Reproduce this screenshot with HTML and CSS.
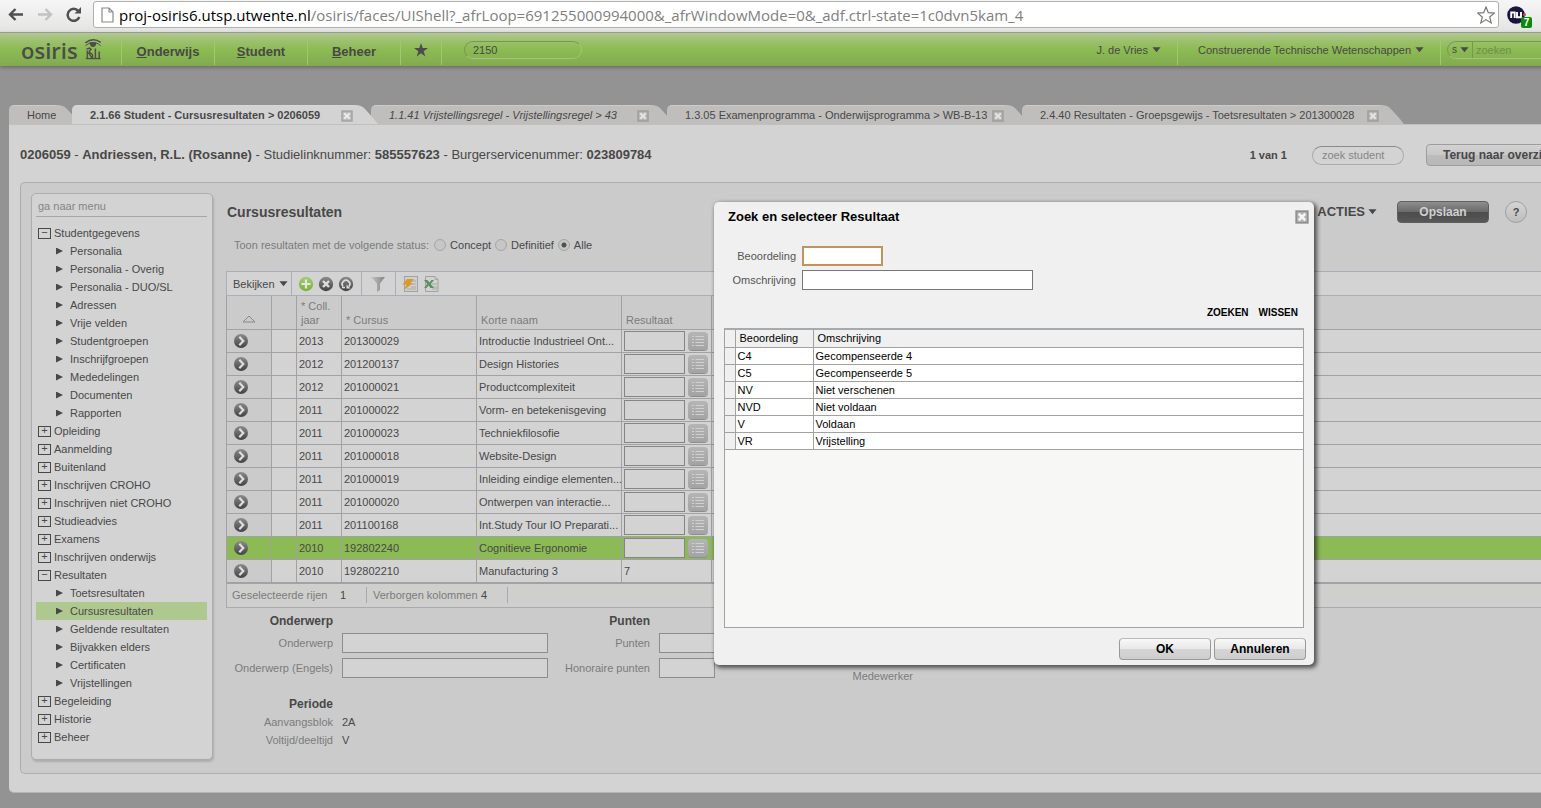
FILE: index.html
```html
<!DOCTYPE html>
<html lang="nl">
<head>
<meta charset="utf-8">
<title>Osiris - Cursusresultaten</title>
<link rel="stylesheet" href="styles.css">
</head>
<body>
<svg class="defs" aria-hidden="true">
  <defs>
    <linearGradient id="g-dark" x1="0" y1="0" x2="0" y2="1"><stop offset="0" stop-color="#8c8c8c"/><stop offset="1" stop-color="#424242"/></linearGradient>
    <linearGradient id="g-green" x1="0" y1="0" x2="0" y2="1"><stop offset="0" stop-color="#a5cc72"/><stop offset="1" stop-color="#7bb03a"/></linearGradient>
    <linearGradient id="g-funnel" x1="0" y1="0" x2="1" y2="0"><stop offset="0" stop-color="#c4c4c4"/><stop offset="1" stop-color="#838383"/></linearGradient>
    <symbol id="i-close" viewBox="0 0 12 12"><rect x="1" y="1" width="10" height="10" fill="#b0b0b0" stroke="#8f8f8f" stroke-width="1.4"/><path d="M3.2 3.2l5.6 5.6M8.800 3.200l-5.600 5.600" stroke="#f4f4f4" stroke-width="2.2"/></symbol>
    <symbol id="i-slope" viewBox="0 0 24 19"><path d="M0 0C6 0 8 1 11 4L20 14Q23 18 24 19H0Z" fill="currentColor"/></symbol>
    <symbol id="i-go" viewBox="0 0 16 16"><circle cx="8" cy="8" r="7" fill="url(#g-dark)"/><path d="M6.300 3.800L10.300 8l-4 4.200" fill="none" stroke="#dedede" stroke-width="2.200"/></symbol>
    <symbol id="i-list" viewBox="0 0 20 18"><path d="M4 4.500h2M4 7.500h2M4 10.500h2M4 13.500h2M7.500 4.500H16M7.500 7.500H16M7.500 10.500H16M7.500 13.500H16" stroke="#d0d0d0" stroke-width="1.200"/></symbol>
    <symbol id="i-down" viewBox="0 0 10 6"><path d="M0.500 0h9L5 5.500z" fill="currentColor"/></symbol>
  </defs>
</svg>

<header class="browser">
  <svg class="nav-ico" viewBox="0 0 16 14"><path d="M15 7H3M7.500 1.500L2 7l5.500 5.500" fill="none" stroke="#505050" stroke-width="2.400"/></svg>
  <svg class="nav-ico" viewBox="0 0 16 14"><path d="M1 7h12M8.500 1.500L14 7l-5.500 5.500" fill="none" stroke="#c2c2c2" stroke-width="2.400"/></svg>
  <svg class="nav-ico" viewBox="0 0 16 15"><path d="M12.300 4A6 6 0 1 0 13.300 10" fill="none" stroke="#505050" stroke-width="2.500"/><path d="M15 0v6.500H8.500z" fill="#505050"/></svg>
  <div class="address">
    <svg class="doc" viewBox="0 0 13 16"><path d="M1 1h7l4 4v10H1zM8 1v4h4" fill="none" stroke="#8a8a8a" stroke-width="1.200"/></svg>
    <span class="url"><b>proj-osiris6.utsp.utwente.nl</b>/osiris/faces/UIShell?_afrLoop=691255000994000&amp;_afrWindowMode=0&amp;_adf.ctrl-state=1c0dvn5kam_4</span>
    <svg class="fav" viewBox="0 0 18 18"><path d="M9 1l2.300 5.700 6 .4-4.600 3.900 1.500 5.900L9 13.600 3.800 16.900l1.500-5.900L.7 7.100l6-.4z" fill="#fff" stroke="#777" stroke-width="1.200"/></svg>
  </div>
  <div class="extension">
    <svg viewBox="0 0 20 18"><circle cx="9" cy="9" r="8.800" fill="#1b1440"/><path d="M4.200 12V6.500h3.500V12M10 6v5.300h4V6" fill="none" stroke="#fff" stroke-width="1.900"/><circle cx="17.500" cy="8.500" r="1.500" fill="#d8405a"/></svg>
    <span class="badge">7</span>
  </div>
</header>

<nav class="topbar">
  <a class="brand" href="#">osiris
    <svg viewBox="0 0 18 22"><path d="M1 4Q9-2 17 3.500" fill="none" stroke="#4c4c4c" stroke-width="1.500"/><path d="M1 7Q4 5 6 4h6q3 1 5 3" fill="none" stroke="#4c4c4c"/><path d="M5.500 3.500h7Q12.500 8.500 9 8.500T5.500 3.500z" fill="#4c4c4c"/><path d="M2 10.500l3.500-1L7 11l-2 1.500 1 2 2.500 2v3.500M3 12v8M4 14l4 6" fill="none" stroke="#4c4c4c" stroke-width="1.400"/><path d="M11.500 10v10M15.500 13v7" stroke="#4c4c4c" stroke-width="1.500"/><path d="M1.500 20.500h15.500" stroke="#4c4c4c" stroke-width="1.300"/></svg>
  </a>
  <a class="menu" href="#"><u>O</u>nderwijs</a>
  <a class="menu" href="#"><u>S</u>tudent</a>
  <a class="menu" href="#"><u>B</u>eheer</a>
  <a class="menu star" href="#" aria-label="Favorieten"><svg viewBox="0 0 14 14"><path d="M7 0l1.700 5H14L9.700 8.200l1.600 5.300L7 10.300l-4.300 3.200 1.600-5.300L0 5h5.300z" fill="#4c4c4c"/></svg></a>
  <input class="quick" type="text" value="2150" aria-label="Schermcode">
  <button class="drop user" type="button">J. de Vries <svg><use href="#i-down"/></svg></button>
  <button class="drop faculty" type="button">Construerende Technische Wetenschappen <svg><use href="#i-down"/></svg></button>
  <div class="finder">
    <button class="kind" type="button">s <svg><use href="#i-down"/></svg></button>
    <input type="text" placeholder="zoeken" aria-label="zoeken">
  </div>
</nav>

<div class="tabs">
  <div class="tab home"><a href="#">Home</a><svg class="slope"><use href="#i-slope"/></svg></div>
  <div class="tab t-active"><a href="#">2.1.66 Student - Cursusresultaten &gt; 0206059</a><button type="button" aria-label="Sluiten"><svg><use href="#i-close"/></svg></button><svg class="slope"><use href="#i-slope"/></svg></div>
  <div class="tab t-second"><a href="#"><i>1.1.41 Vrijstellingsregel - Vrijstellingsregel &gt; 43</i></a><button type="button" aria-label="Sluiten"><svg><use href="#i-close"/></svg></button><svg class="slope"><use href="#i-slope"/></svg></div>
  <div class="tab t-third"><a href="#">1.3.05 Examenprogramma - Onderwijsprogramma &gt; WB-B-13</a><button type="button" aria-label="Sluiten"><svg><use href="#i-close"/></svg></button><svg class="slope"><use href="#i-slope"/></svg></div>
  <div class="tab t-fourth"><a href="#">2.4.40 Resultaten - Groepsgewijs - Toetsresultaten &gt; 201300028</a><button type="button" aria-label="Sluiten"><svg><use href="#i-close"/></svg></button><svg class="slope"><use href="#i-slope"/></svg></div>
</div>

<div class="page">
  <div class="pagehead">
    <div class="student"><b>0206059</b> - <b>Andriessen, R.L. (Rosanne)</b> - Studielinknummer: <b>585557623</b> - Burgerservicenummer: <b>023809784</b></div>
    <b class="count">1 van 1</b>
    <input class="find-student" type="text" placeholder="zoek student" aria-label="zoek student">
    <button class="back" type="button">Terug naar overzicht</button>
  </div>

  <div class="panel">
    <aside class="side">
      <input class="goto" type="text" placeholder="ga naar menu" aria-label="ga naar menu">
      <ul class="tree">
        <li><a class="open" href="#">Studentgegevens</a>
          <ul>
            <li><a href="#">Personalia</a></li>
            <li><a href="#">Personalia - Overig</a></li>
            <li><a href="#">Personalia - DUO/SL</a></li>
            <li><a href="#">Adressen</a></li>
            <li><a href="#">Vrije velden</a></li>
            <li><a href="#">Studentgroepen</a></li>
            <li><a href="#">Inschrijfgroepen</a></li>
            <li><a href="#">Mededelingen</a></li>
            <li><a href="#">Documenten</a></li>
            <li><a href="#">Rapporten</a></li>
          </ul>
        </li>
        <li><a class="shut" href="#">Opleiding</a></li>
        <li><a class="shut" href="#">Aanmelding</a></li>
        <li><a class="shut" href="#">Buitenland</a></li>
        <li><a class="shut" href="#">Inschrijven CROHO</a></li>
        <li><a class="shut" href="#">Inschrijven niet CROHO</a></li>
        <li><a class="shut" href="#">Studieadvies</a></li>
        <li><a class="shut" href="#">Examens</a></li>
        <li><a class="shut" href="#">Inschrijven onderwijs</a></li>
        <li><a class="open" href="#">Resultaten</a>
          <ul>
            <li><a href="#">Toetsresultaten</a></li>
            <li><a class="current" href="#">Cursusresultaten</a></li>
            <li><a href="#">Geldende resultaten</a></li>
            <li><a href="#">Bijvakken elders</a></li>
            <li><a href="#">Certificaten</a></li>
            <li><a href="#">Vrijstellingen</a></li>
          </ul>
        </li>
        <li><a class="shut" href="#">Begeleiding</a></li>
        <li><a class="shut" href="#">Historie</a></li>
        <li><a class="shut" href="#">Beheer</a></li>
      </ul>
    </aside>

    <main class="main">
      <div class="titlebar">
        <h1>Cursusresultaten</h1>
        <button class="acties" type="button">ACTIES <svg><use href="#i-down"/></svg></button>
        <button class="save" type="button">Opslaan</button>
        <button class="help" type="button">?</button>
      </div>
      <div class="status">
        <span class="lead">Toon resultaten met de volgende status:</span>
        <label><input type="radio" name="status">Concept</label>
        <label><input type="radio" name="status">Definitief</label>
        <label><input type="radio" name="status" checked>Alle</label>
      </div>

      <div class="toolbar">
        <div class="group view"><button type="button">Bekijken <svg class="arrow"><use href="#i-down"/></svg></button></div>
        <div class="group acts">
          <button type="button" aria-label="Toevoegen"><svg viewBox="0 0 16 16"><circle cx="8" cy="8" r="7.200" fill="url(#g-green)"/><path d="M8 3.500v9M3.500 8h9" stroke="#e6e6e6" stroke-width="2.200"/></svg></button>
          <button type="button" aria-label="Verwijderen"><svg viewBox="0 0 16 16"><circle cx="8" cy="8" r="7.200" fill="url(#g-dark)"/><path d="M5 5l6 6M11 5l-6 6" stroke="#dedede" stroke-width="2.400"/></svg></button>
          <button type="button" aria-label="Herstellen"><svg viewBox="0 0 16 16"><circle cx="8" cy="8" r="7.200" fill="url(#g-dark)"/><path d="M5 10.500A3.800 3.800 0 1 1 11 10.500" fill="none" stroke="#dedede" stroke-width="1.700"/><path d="M8.500 8.500v4h4z" fill="#dedede"/><path d="M4 11.500h3" stroke="#dedede" stroke-width="1.500"/></svg></button>
        </div>
        <div class="group filter">
          <button type="button" aria-label="Filter"><svg viewBox="0 0 16 16"><path d="M1 1h14l-5 6.500V14l-3 2V7.500z" fill="url(#g-funnel)"/></svg></button>
        </div>
        <div class="group exports">
          <button type="button" aria-label="Snelle invoer"><svg viewBox="0 0 16 16"><rect x="2.500" y=".5" width="13" height="15" fill="#cfcfcf" stroke="#a2a2a2"/><path d="M9 5h5M9 8h5M9 11h5M5 13h9" stroke="#aaa"/><path d="M5 3h7L8.500 7H11L2 14l2.500-5.500H.5z" fill="#d99a2b"/></svg></button>
          <button type="button" aria-label="Exporteren naar Excel"><svg viewBox="0 0 16 16"><path d="M2.500.5H12l3 3v12H2.500z" fill="#d2d2d2" stroke="#a2a2a2"/><path d="M12 .5v3h3M9 8h5M9 11h5M9 13h5" fill="none" stroke="#9ab29a"/><path d="M1 4h3.500l2 2.500 2-2.500h2.500L7.800 8l3.200 4H7.500L5.600 9.500 3.500 12H1l3.200-4z" fill="#5c9061"/></svg></button>
        </div>
      </div>

      <table class="grid">
        <colgroup><col class="c1"><col class="c2"><col class="c3"><col class="c4"><col class="c5"><col class="c6"><col></colgroup>
        <thead>
          <tr><th class="sort"><svg viewBox="0 0 14 8"><path d="M1 7h12L7 1z" fill="none" stroke="#888"/></svg></th><th></th><th>* Coll. jaar</th><th>* Cursus</th><th>Korte naam</th><th>Resultaat</th><th></th></tr>
        </thead>
        <tbody>
          <tr><td><button class="go" type="button" aria-label="Openen"><svg><use href="#i-go"/></svg></button></td><td></td><td>2013</td><td>201300029</td><td>Introductie Industrieel Ont...</td><td><div class="pick"><input type="text" aria-label="Resultaat"><button type="button" aria-label="Kiezen"><svg><use href="#i-list"/></svg></button></div></td><td></td></tr>
          <tr><td><button class="go" type="button" aria-label="Openen"><svg><use href="#i-go"/></svg></button></td><td></td><td>2012</td><td>201200137</td><td>Design Histories</td><td><div class="pick"><input type="text" aria-label="Resultaat"><button type="button" aria-label="Kiezen"><svg><use href="#i-list"/></svg></button></div></td><td></td></tr>
          <tr><td><button class="go" type="button" aria-label="Openen"><svg><use href="#i-go"/></svg></button></td><td></td><td>2012</td><td>201000021</td><td>Productcomplexiteit</td><td><div class="pick"><input type="text" aria-label="Resultaat"><button type="button" aria-label="Kiezen"><svg><use href="#i-list"/></svg></button></div></td><td></td></tr>
          <tr><td><button class="go" type="button" aria-label="Openen"><svg><use href="#i-go"/></svg></button></td><td></td><td>2011</td><td>201000022</td><td>Vorm- en betekenisgeving</td><td><div class="pick"><input type="text" aria-label="Resultaat"><button type="button" aria-label="Kiezen"><svg><use href="#i-list"/></svg></button></div></td><td></td></tr>
          <tr><td><button class="go" type="button" aria-label="Openen"><svg><use href="#i-go"/></svg></button></td><td></td><td>2011</td><td>201000023</td><td>Techniekfilosofie</td><td><div class="pick"><input type="text" aria-label="Resultaat"><button type="button" aria-label="Kiezen"><svg><use href="#i-list"/></svg></button></div></td><td></td></tr>
          <tr><td><button class="go" type="button" aria-label="Openen"><svg><use href="#i-go"/></svg></button></td><td></td><td>2011</td><td>201000018</td><td>Website-Design</td><td><div class="pick"><input type="text" aria-label="Resultaat"><button type="button" aria-label="Kiezen"><svg><use href="#i-list"/></svg></button></div></td><td></td></tr>
          <tr><td><button class="go" type="button" aria-label="Openen"><svg><use href="#i-go"/></svg></button></td><td></td><td>2011</td><td>201000019</td><td>Inleiding eindige elementen...</td><td><div class="pick"><input type="text" aria-label="Resultaat"><button type="button" aria-label="Kiezen"><svg><use href="#i-list"/></svg></button></div></td><td></td></tr>
          <tr><td><button class="go" type="button" aria-label="Openen"><svg><use href="#i-go"/></svg></button></td><td></td><td>2011</td><td>201000020</td><td>Ontwerpen van interactie...</td><td><div class="pick"><input type="text" aria-label="Resultaat"><button type="button" aria-label="Kiezen"><svg><use href="#i-list"/></svg></button></div></td><td></td></tr>
          <tr><td><button class="go" type="button" aria-label="Openen"><svg><use href="#i-go"/></svg></button></td><td></td><td>2011</td><td>201100168</td><td>Int.Study Tour IO Preparati...</td><td><div class="pick"><input type="text" aria-label="Resultaat"><button type="button" aria-label="Kiezen"><svg><use href="#i-list"/></svg></button></div></td><td></td></tr>
          <tr class="selected"><td><button class="go" type="button" aria-label="Openen"><svg><use href="#i-go"/></svg></button></td><td></td><td>2010</td><td>192802240</td><td>Cognitieve Ergonomie</td><td><div class="pick"><input type="text" aria-label="Resultaat"><button type="button" aria-label="Kiezen"><svg><use href="#i-list"/></svg></button></div></td><td></td></tr>
          <tr><td><button class="go" type="button" aria-label="Openen"><svg><use href="#i-go"/></svg></button></td><td></td><td>2010</td><td>192802210</td><td>Manufacturing 3</td><td>7</td><td></td></tr>
        </tbody>
      </table>
      <div class="gridfoot">
        <div class="rows">Geselecteerde rijen <span>1</span></div>
        <div class="cols">Verborgen kolommen <span>4</span></div>
      </div>

      <div class="form">
        <div class="fields">
          <h2>Onderwerp</h2>
          <label for="ond">Onderwerp</label><input id="ond" type="text">
          <label for="ond-en">Onderwerp (Engels)</label><input id="ond-en" type="text">
        </div>
        <div class="fields points">
          <h2>Punten</h2>
          <label for="pnt">Punten</label><input id="pnt" type="text">
          <label for="hpnt">Honoraire punten</label><input id="hpnt" type="text">
        </div>
        <div class="staff">Medewerker</div>
      </div>
      <div class="fields period">
        <h2>Periode</h2>
        <span class="name">Aanvangsblok</span><span>2A</span>
        <span class="name">Voltijd/deeltijd</span><span>V</span>
      </div>
    </main>
  </div>
</div>

<section class="dialog" role="dialog" aria-labelledby="dlg-title">
  <div class="dlg-head">
    <h2 id="dlg-title">Zoek en selecteer Resultaat</h2>
    <button type="button" aria-label="Sluiten"><svg><use href="#i-close"/></svg></button>
  </div>
  <div class="dlg-form">
    <label for="beo">Beoordeling</label><input id="beo" class="focus" type="text">
    <label for="oms">Omschrijving</label><input id="oms" class="wide" type="text">
  </div>
  <div class="dlg-actions"><button type="button">ZOEKEN</button><button type="button">WISSEN</button></div>
  <div class="dlg-list">
    <table>
      <colgroup><col class="d1"><col class="d2"><col></colgroup>
      <thead><tr><th></th><th>Beoordeling</th><th>Omschrijving</th></tr></thead>
      <tbody>
        <tr><td></td><td>C4</td><td>Gecompenseerde 4</td></tr>
        <tr><td></td><td>C5</td><td>Gecompenseerde 5</td></tr>
        <tr><td></td><td>NV</td><td>Niet verschenen</td></tr>
        <tr><td></td><td>NVD</td><td>Niet voldaan</td></tr>
        <tr><td></td><td>V</td><td>Voldaan</td></tr>
        <tr><td></td><td>VR</td><td>Vrijstelling</td></tr>
      </tbody>
    </table>
  </div>
  <div class="dlg-foot"><button type="button">OK</button><button type="button">Annuleren</button></div>
</section>
</body>
</html>
```

FILE: styles.css
```css
* { box-sizing: border-box; }
body {
  margin: 0;
  min-height: 100vh;
  position: relative;
  overflow: hidden;
  background: #939393;
  color: #484848;
  font: 11px/14px "Liberation Sans", Arial, sans-serif;
}
button, input { font: inherit; color: inherit; margin: 0; padding: 0; }
button { background: none; border: 0; white-space: nowrap; }
a { color: inherit; text-decoration: none; }
svg { display: block; flex: none; }
h1, h2 { margin: 0; }
ul { list-style: none; margin: 0; padding: 0; }
.defs { position: absolute; width: 0; height: 0; }

/* browser chrome */
.browser {
  display: flex;
  align-items: center;
  height: 33px;
  padding: 0 8px 3px 8px;
  background: linear-gradient(#f6f6f6, #e4e4e4);
  border-bottom: 1px solid #a6a6a6;
}
.nav-ico { width: 16px; height: 15px; margin-right: 13px; }
.address {
  flex: 1;
  display: flex;
  align-items: center;
  height: 27px;
  margin: 0 8px 0 -2px;
  padding: 0 3px 0 7px;
  background: #fff;
  border: 1px solid #b0b0b0;
  border-radius: 3px;
}
.doc { width: 13px; height: 16px; }
.url { flex: 1; padding-left: 5px; font: 15px/22px "Open Sans", "Noto Sans", sans-serif; color: #808080; white-space: nowrap; }
.url b { font-weight: 400; color: #000; }
.fav { width: 18px; height: 18px; }
.extension { position: relative; width: 26px; }
.extension svg { width: 20px; height: 18px; }
.badge {
  position: absolute;
  left: 14px;
  top: 11px;
  width: 11px;
  height: 11px;
  border-radius: 2px;
  background: #0a8a0a;
  color: #fff;
  font: bold 10px/11px "Liberation Sans", Arial, sans-serif;
  text-align: center;
}

/* application bar */
.topbar {
  display: flex;
  align-items: center;
  height: 33px;
  margin-right: -60px;
  background: linear-gradient(#b0c892 0%, #9cc06d 25%, #8cbb53 50%, #82aa51 100%);
  box-shadow: 0 1px 4px rgba(0, 0, 0, .35);
}
.brand {
  display: flex;
  align-items: center;
  gap: 6px;
  width: 121px;
  padding-left: 21px;
  font: 600 22px/30px "Open Sans", sans-serif;
  color: #4c4c4c;
}
.brand svg { width: 18px; height: 21px; }
.menu {
  width: 93px;
  height: 30px;
  border-left: 1px solid #a0c86e;
  font: bold 13px/33px "Liberation Sans", Arial, sans-serif;
  text-align: center;
}
.star { width: 42px; display: flex; align-items: center; justify-content: center; border-right: 1px solid #a0c86e; }
.star svg { width: 14px; height: 14px; }
.quick {
  width: 118px;
  height: 18px;
  margin: 0 auto 0 22px;
  padding: 0 8px;
  background: none;
  border: 1px solid #a0c578;
  border-top-color: #769a4c;
  border-left-color: #769a4c;
  border-radius: 9px;
}
.drop { display: flex; align-items: center; gap: 4px; height: 30px; }
.drop svg, .kind svg { width: 9px; height: 6px; }
.user { padding-right: 16px; }
.faculty { padding: 0 16px 0 20px; border: solid #a0c86e; border-width: 0 1px; }
.finder { display: flex; width: 154px; height: 18px; margin-left: 6px; border: 1px solid #769a4c; border-bottom-color: #a0c578; border-radius: 9px; }
.kind { display: flex; align-items: center; gap: 3px; width: 25px; padding-left: 4px; border-right: 1px solid #769a4c; font-size: 10px; }
.finder input { width: 110px; padding-left: 3px; background: none; border: 0; }

/* tabs */
.tabs { display: flex; margin: 39px 0 0 9px; height: 19px; }
.tab { display: flex; height: 19px; margin-right: -7px; color: #bfbebc; }
.tab a, .tab button {
  height: 19px;
  background: #bfbebc;
  border-top: 1px solid #cccbc9;
  color: #484848;
  line-height: 18px;
  white-space: nowrap;
}
.tab a { flex: 1; padding-left: 18px; border-radius: 5px 0 0 0; }
.tab button { width: 13px; }
.tab button svg { width: 12px; height: 12px; margin-top: 2px; opacity: .7; }
.slope { width: 24px; height: 19px; }
.home { width: 70px; }
.t-active { position: relative; z-index: 1; width: 306px; color: #d3d3d3; }
.t-active a, .t-active button { background: #d3d3d3; border-color: #d8d8d8; font-weight: bold; }
.t-second { width: 303px; }
.t-third { width: 362px; }
.t-fourth { width: 382px; }

/* page */
.page {
  margin: 0 -40px 15px 9px;
  padding: 0 0 18px 11px;
  background: #d3d3d3;
  border: solid #b4b4b4;
  border-width: 0 0 1px;
  border-radius: 0 0 0 5px;
  box-shadow: inset 0 1px 0 #c0c0c0;
}
.pagehead { display: flex; align-items: center; height: 58px; padding-top: 4px; }
.student { flex: 1; font-size: 13px; white-space: nowrap; }
.count { margin-right: 25px; }
.find-student {
  width: 92px;
  height: 19px;
  margin-right: 22px;
  padding: 0 9px;
  background: none;
  border: 1px solid #ababab;
  border-top-color: #8a8a8a;
  border-radius: 10px;
}
input::placeholder { color: #858585; opacity: 1; }
.finder input::placeholder { color: #6f8f4d; }
.back {
  width: 155px;
  height: 22px;
  padding-left: 16px;
  background: linear-gradient(#d2d2d2, #c8c8c8 50%, #bcbcbc 51%, #b8b8b8);
  border: 1px solid #9d9d9d;
  border-radius: 4px;
  font-size: 12px;
  font-weight: bold;
  text-align: left;
}
.panel {
  display: flex;
  align-items: flex-start;
  padding: 10px 0 13px 10px;
  background: #cbcbcb;
  border: 1px solid #adadad;
  border-right: 0;
  border-radius: 5px;
}

/* side menu */
.side {
  flex: none;
  width: 182px;
  padding: 1px 5px 13px 4px;
  background: #d3d3d3;
  border: 1px solid #adadad;
  border-radius: 5px;
  box-shadow: 1px 2px 2px rgba(0, 0, 0, .15);
}
.goto { display: block; width: 100%; height: 22px; padding: 0 2px; background: none; border: 0; border-bottom: 1px solid #a6a6a6; }
.tree { padding-top: 7px; }
.tree a { display: flex; align-items: center; height: 18px; padding-left: 2px; }
.tree a::before {
  width: 11px;
  height: 9px;
  margin-right: 5px;
  border: 1px solid #484848;
  font: 11px/7px "Liberation Sans", Arial, sans-serif;
  text-align: center;
}
.tree .open::before, .tree .shut::before { content: "\2212"; margin-right: 3px; }
.tree .shut::before { content: "+"; }
.tree ul a { padding-left: 20px; }
.tree ul a::before {
  content: "";
  width: 7px;
  height: 7px;
  margin-right: 7px;
  border: 0;
  background: #484848;
  clip-path: polygon(0 0, 100% 50%, 0 100%);
}
.tree .current { background: #afc890; }

/* main column */
.main { flex: 1; min-width: 0; padding-left: 13px; }
.titlebar { display: flex; align-items: center; height: 38px; padding: 0 54px 0 1px; }
.titlebar h1 { flex: 1; font-size: 14px; line-height: 16px; }
.acties { display: flex; align-items: center; gap: 3px; margin-right: 20px; font-size: 13px; font-weight: bold; }
.acties svg { width: 9px; height: 6px; }
.save {
  width: 92px;
  height: 22px;
  margin-right: 16px;
  background: linear-gradient(#8e8e8e, #6a6a6a 50%, #4c4c4c 51%, #585858);
  border: 1px solid #606060;
  border-radius: 4px;
  color: #d0d0d0;
  font-size: 12px;
  font-weight: bold;
}
.help { width: 22px; height: 22px; border: 1px solid #a0a0a0; border-radius: 50%; background: linear-gradient(#d4d4d4, #bebebe); font-weight: bold; }
.status { display: flex; align-items: center; height: 28px; padding-left: 8px; }
.status .lead { margin-right: 5px; color: #7b7b7b; }
.status label { display: flex; align-items: center; gap: 4px; margin-right: 4px; }
.status input {
  appearance: none;
  width: 12px;
  height: 12px;
  border: 1px solid #a5a5a5;
  border-radius: 50%;
  background: #c6c6c6;
}
.status input:checked { background: radial-gradient(#505050 0 2px, #c6c6c6 3px); }
.toolbar { display: flex; height: 25px; margin-top: 12px; background: #d3d3d3; border: 1px solid #a9afb6; border-width: 1px 0 1px 1px; }
.group { display: flex; align-items: center; border-right: 1px solid #a9afb6; }
.group svg { width: 16px; height: 16px; }
.group .arrow { width: 9px; height: 6px; }
.view button { display: flex; align-items: center; gap: 4px; }
.view { width: 65px; padding-left: 6px; }
.acts { width: 70px; padding-left: 6px; gap: 4px; }
.filter { width: 34px; padding-left: 8px; }
.exports { padding-left: 6px; gap: 5px; border: 0; }

.grid { width: 100%; table-layout: fixed; border-collapse: collapse; background: #d3d3d3; }
.c1 { width: 45px; }
.c2 { width: 25px; }
.c3 { width: 45px; }
.c4 { width: 135px; }
.c5 { width: 145px; }
.c6 { width: 90px; }
.grid th, .grid td { border: 1px solid #a2a2a4; text-align: left; white-space: nowrap; }
.grid th { height: 33px; padding: 2px 4px; background: #cbcbcb; border-top: 0; color: #7b7b7b; font-weight: 400; vertical-align: bottom; white-space: normal; }
.sort svg { width: 14px; height: 8px; margin: 0 0 4px 11px; }
.grid td { height: 23px; padding: 0 2px; }
.grid td:first-child { background: #cbcbcb; }
.go { display: block; padding-left: 4px; }
.go svg { width: 16px; height: 16px; }
.pick { display: flex; align-items: center; gap: 3px; }
.pick input { width: 61px; height: 20px; background: #d3d3d3; border: 1px solid #858585; }
.pick button { width: 20px; height: 18px; border-radius: 4px; background: linear-gradient(#b5b5b5, #a3a3a3); box-shadow: 0 1px 0 #8e8e8e; }
.pick svg { width: 20px; height: 18px; }
.grid .selected td { background: #8cba55; }
.gridfoot {
  display: flex;
  align-items: center;
  height: 25px;
  background: #cfcfcd;
  border: 1px solid #a9a9b4;
  border-top-color: #a2a2a4;
  color: #7b7b7b;
}
.gridfoot div { display: flex; justify-content: space-between; height: 16px; line-height: 16px; border-right: 1px solid #a9a9b4; }
.gridfoot span { color: #484848; }
.rows { width: 140px; padding: 0 20px 0 5px; }
.cols { width: 141px; padding: 0 20px 0 6px; }

.form { display: flex; align-items: flex-start; padding-top: 7px; }
.fields { display: grid; grid-template-columns: 107px 206px; column-gap: 9px; row-gap: 5px; align-items: center; color: #484848; }
.fields h2 { grid-column: 1; grid-row: 1; font-size: 12px; line-height: 13px; text-align: right; }
.fields label, .fields .name { grid-column: 1; color: #7b7b7b; text-align: right; white-space: nowrap; }
.fields input { width: 100%; height: 20px; background: #d3d3d3; border: 1px solid #8d8d8d; }
.points { grid-template-columns: 102px 56px; }
.staff { width: 198px; padding-top: 54px; color: #7b7b7b; text-align: right; }
.period { padding-top: 15px; row-gap: 4px; }

/* result picker */
.dialog {
  position: absolute;
  z-index: 2;
  left: 714px;
  top: 202px;
  width: 600px;
  padding: 0 10px 5px;
  background: #f0f0f0;
  border-radius: 5px;
  box-shadow: 2px 2px 4px 1px rgba(0, 0, 0, .6);
  color: #000;
}
.dlg-head { display: flex; align-items: center; justify-content: space-between; height: 30px; margin-right: -5px; padding-left: 4px; }
.dlg-head h2 { font-size: 13px; line-height: 16px; }
.dlg-head svg { width: 14px; height: 14px; }
.dlg-form { display: grid; grid-template-columns: 72px auto; gap: 4px 6px; align-items: center; justify-content: start; padding-top: 14px; }
.dlg-form label { color: #555; text-align: right; }
.dlg-form input { height: 20px; background: #fff; border: 1px solid #777; }
.dlg-form .focus { width: 81px; border: 2px solid #c0945c; }
.dlg-form .wide { width: 231px; }
.dlg-actions { display: flex; justify-content: flex-end; gap: 10px; padding: 15px 6px 8px; }
.dlg-actions button { font-size: 10px; font-weight: bold; line-height: 15px; }
.dlg-list { height: 300px; background: #f7f7f5; border: 1px solid #a2a2a2; border-top: 2px solid #a4aaae; }
.dlg-list table { width: 100%; table-layout: fixed; border-collapse: collapse; background: #fff; }
.d1 { width: 10px; }
.d2 { width: 78px; }
.dlg-list th, .dlg-list td { height: 17px; padding: 0 2px; border: 1px solid #a2a2a2; border-top: 0; font-weight: 400; text-align: left; line-height: 16px; }
.dlg-list th { padding: 0 4px; background: #f0f0f0; }
.dlg-list td:first-child { background: #f0f0f0; }
.dlg-list tr > :first-child { border-left: 0; }
.dlg-list tr > :last-child { border-right: 0; }
.dlg-foot { display: flex; justify-content: flex-end; gap: 3px; margin-right: -2px; padding-top: 10px; }
.dlg-foot button {
  width: 92px;
  height: 22px;
  background: linear-gradient(#f8f8f8, #e8e8e8 50%, #d6d6d6 51%, #cdcdcd);
  border: 1px solid #999;
  border-top-color: #bbb;
  border-radius: 4px;
  font-size: 12px;
  font-weight: bold;
}
```
